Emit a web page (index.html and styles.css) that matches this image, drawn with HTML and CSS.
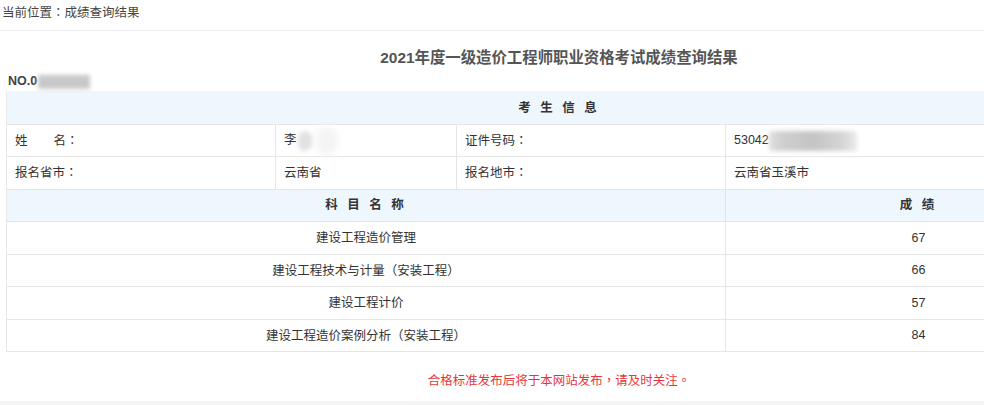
FILE: index.html
```html
<!DOCTYPE html>
<html lang="zh-CN">
<head>
<meta charset="utf-8">
<title>成绩查询结果</title>
<link rel="stylesheet" href="styles.css">
</head>
<body>
<div class="page">
  <div class="crumb">当前位置<span class="p" lang="zh-TW">：</span>成绩查询结果</div>
  <div class="content">
    <h1 class="title">2021年度一级造价工程师职业资格考试成绩查询结果</h1>
    <div class="no">NO.0<span class="blur blur-no"></span></div>
    <table class="score">
      <colgroup>
        <col class="c1"><col class="c2"><col class="c3"><col class="c4">
      </colgroup>
      <tr class="head"><th colspan="4">考 生 信 息</th></tr>
      <tr>
        <td>姓<span class="gap"></span>名<span class="p" lang="zh-TW">：</span></td>
        <td>李<span class="blur blur-name"></span></td>
        <td>证件号码<span class="p" lang="zh-TW">：</span></td>
        <td>53042<span class="blur blur-id"></span></td>
      </tr>
      <tr>
        <td>报名省市<span class="p" lang="zh-TW">：</span></td>
        <td>云南省</td>
        <td>报名地市<span class="p" lang="zh-TW">：</span></td>
        <td>云南省玉溪市</td>
      </tr>
      <tr class="head"><th colspan="3">科 目 名 称</th><th>成 绩</th></tr>
      <tr class="sub"><td colspan="3">建设工程造价管理</td><td>67</td></tr>
      <tr class="sub"><td colspan="3">建设工程技术与计量<span class="p" lang="zh-TW">（</span>安装工程<span class="p" lang="zh-TW">）</span></td><td>66</td></tr>
      <tr class="sub"><td colspan="3">建设工程计价</td><td>57</td></tr>
      <tr class="sub"><td colspan="3">建设工程造价案例分析<span class="p" lang="zh-TW">（</span>安装工程<span class="p" lang="zh-TW">）</span></td><td>84</td></tr>
    </table>
    <p class="notice">合格标准发布后将于本网站发布<span class="p" lang="zh-TW">，</span>请及时关注<span class="p" lang="zh-TW">。</span></p>
  </div>
</div>
</body>
</html>
```

FILE: styles.css
```css
html, body {
  margin: 0;
  padding: 0;
  overflow: hidden;
}
body {
  background: #f3f3f3;
  font-family: "Liberation Sans", "Noto Sans CJK SC", sans-serif;
  font-size: 12.5px;
  color: #333;
}
.p {
  font-family: "Noto Sans CJK TC", "Noto Sans CJK SC", sans-serif;
  font-feature-settings: "locl" 0;
}
.page {
  width: 1118px;
  height: 401px;
  background: #fff;
}
.crumb {
  height: 30px;
  line-height: 24px;
  padding-left: 2px;
  color: #444;
  border-bottom: 1px solid #ebebeb;
}
.content {
  padding: 0 6px;
}
.title {
  margin: 0;
  height: 38px;
  padding-top: 14px;
  box-sizing: border-box;
  line-height: 26px;
  font-size: 15.4px;
  font-weight: bold;
  text-align: center;
  color: #555;
}
.no {
  height: 22px;
  line-height: 24px;
  padding-left: 2px;
  font-weight: bold;
  color: #444;
  font-size: 12.5px;
}
.blur {
  display: inline-block;
  vertical-align: middle;
  filter: blur(2px);
}
.blur-no {
  width: 52px;
  height: 14px;
  background: #c8c8c8;
  margin-left: 1px;
}
.blur-name {
  width: 14px;
  height: 20px;
  border-radius: 8px;
  background: #e2e2e2;
  box-shadow: 22px 0 6px 4px #f4f4f4;
  margin-left: 1px;
}
.blur-id {
  width: 88px;
  height: 20px;
  background: linear-gradient(90deg, #e0e0e0 0, #cfcfcf 15%, #c4c4c4 50%, #d6d6d6 85%, #ececec 100%);
  margin-left: 0;
}
.score {
  width: 1105px;
  border-collapse: collapse;
  table-layout: fixed;
  border-left: 1px solid #e3e3e3;
}
.c1 { width: 269px; }
.c2 { width: 181px; }
.c3 { width: 269px; }
.c4 { width: 386px; }
.score th, .score td {
  height: 31.5px;
  padding: 0 8px;
  border: 1px solid #e6e6e6;
  border-left-color: #e8e8e8;
  line-height: 20px;
  text-align: left;
  font-weight: normal;
}
.score tr.head th {
  background: #eef6fe;
  font-weight: bold;
  text-align: center;
  letter-spacing: 3px;
  color: #333;
  border-top-color: #eef6fe;
}
.score tr.sub td {
  text-align: center;
}
.gap {
  display: inline-block;
  width: 26px;
}
.notice {
  margin: 0;
  padding-top: 18px;
  text-align: center;
  color: #e8353b;
  line-height: 20px;
}
```
